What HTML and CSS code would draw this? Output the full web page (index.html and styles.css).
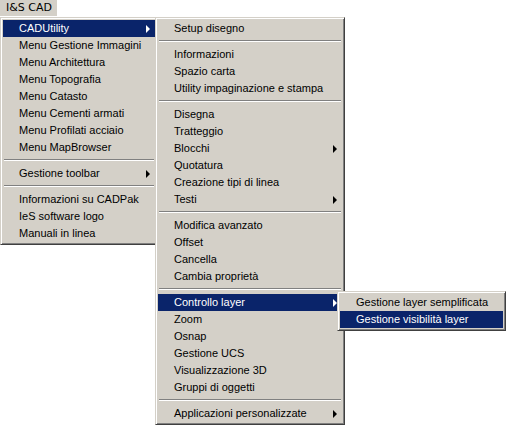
FILE: index.html
```html
<!DOCTYPE html>
<html lang="it">
  <head>
    <meta charset="UTF-8" />
    <meta name="viewport" content="width=device-width, initial-scale=1.0" />
    <title>I&amp;S CAD</title>
    <link rel="stylesheet" href="styles.css">
  </head>
  <body>
    <div class="menubar">
      <div class="menubar-item">I&amp;S CAD</div>
    </div>

    <div class="desktop">
      <!-- menu principale -->
      <div class="menu menu-main">
        <div class="row active"><span>CADUtility</span><i class="arrow"></i></div>
        <div class="row"><span>Menu Gestione Immagini</span></div>
        <div class="row"><span>Menu Architettura</span></div>
        <div class="row"><span>Menu Topografia</span></div>
        <div class="row"><span>Menu Catasto</span></div>
        <div class="row"><span>Menu Cementi armati</span></div>
        <div class="row"><span>Menu Profilati acciaio</span></div>
        <div class="row"><span>Menu MapBrowser</span></div>
        <div class="sep"></div>
        <div class="row"><span>Gestione toolbar</span><i class="arrow"></i></div>
        <div class="sep"></div>
        <div class="row"><span>Informazioni su CADPak</span></div>
        <div class="row"><span>IeS software logo</span></div>
        <div class="row"><span>Manuali in linea</span></div>
      </div>

      <!-- sottomenu CADUtility -->
      <div class="menu menu-sub">
        <div class="row"><span>Setup disegno</span></div>
        <div class="sep"></div>
        <div class="row"><span>Informazioni</span></div>
        <div class="row"><span>Spazio carta</span></div>
        <div class="row"><span>Utility impaginazione e stampa</span></div>
        <div class="sep"></div>
        <div class="row"><span>Disegna</span></div>
        <div class="row"><span>Tratteggio</span></div>
        <div class="row"><span>Blocchi</span><i class="arrow"></i></div>
        <div class="row"><span>Quotatura</span></div>
        <div class="row"><span>Creazione tipi di linea</span></div>
        <div class="row"><span>Testi</span><i class="arrow"></i></div>
        <div class="sep"></div>
        <div class="row"><span>Modifica avanzato</span></div>
        <div class="row"><span>Offset</span></div>
        <div class="row"><span>Cancella</span></div>
        <div class="row"><span>Cambia proprietà</span></div>
        <div class="sep"></div>
        <div class="row active"><span>Controllo layer</span><i class="arrow"></i></div>
        <div class="row"><span>Zoom</span></div>
        <div class="row"><span>Osnap</span></div>
        <div class="row"><span>Gestione UCS</span></div>
        <div class="row"><span>Visualizzazione 3D</span></div>
        <div class="row"><span>Gruppi di oggetti</span></div>
        <div class="sep"></div>
        <div class="row"><span>Applicazioni personalizzate</span><i class="arrow"></i></div>
      </div>

      <!-- sottomenu Controllo layer -->
      <div class="menu menu-layer">
        <div class="row"><span>Gestione layer semplificata</span></div>
        <div class="row active"><span>Gestione visibilità layer</span></div>
      </div>
    </div>
  </body>
</html>
```

FILE: styles.css
```css
body {
  margin: 0;
  background-color: #ffffff;
  font-family: "Liberation Sans", Arial, sans-serif;
  font-size: 11px;
  color: #000000;
  width: 508px;
  height: 425px;
  overflow: hidden;
}

.menubar {
  display: flex;
  height: 17px;
}

.menubar-item {
  background-color: #d4d0c8; /* voce aperta */
  padding: 0 5px 0 6px;
  line-height: 16px;
  height: 16px;
  font-family: "DejaVu Sans", sans-serif;
  font-size: 11px;
}

.desktop {
  position: relative;
}

/* finestra menu stile Windows 2000 */
.menu {
  position: absolute;
  background-color: #d4d0c8;
  border: 1px solid;
  border-color: #d4d0c8 #404040 #404040 #d4d0c8;
  box-shadow: inset 1px 1px #ffffff, inset -1px -1px #808080;
  padding: 2px;
  box-sizing: border-box;
}

.menu-main {
  left: 0;
  top: 0;
  width: 158px;
}

.menu-sub {
  left: 155px;
  top: 0;
  width: 190px;
}

.menu-layer {
  left: 337px;
  top: 274px;
  width: 169px;
}

.row {
  display: flex;
  align-items: center;
  justify-content: space-between;
  height: 17px;
  padding: 0 5px 1px 16px;
  box-sizing: border-box;
  white-space: nowrap;
}

.row.active {
  background-color: #0a246a;
  color: #ffffff;
}

.arrow {
  width: 0;
  height: 0;
  margin-top: 1px;
  border-left: 4px solid #000000;
  border-top: 4px solid transparent;
  border-bottom: 4px solid transparent;
}

.row.active .arrow {
  border-left-color: #ffffff;
}

.sep {
  height: 9px;
  margin: 0 1px;
  box-sizing: border-box;
  padding-top: 3px;
}

.sep::before {
  content: "";
  display: block;
  height: 1px;
  background-color: #808080;
  border-bottom: 1px solid #ffffff;
}
```
